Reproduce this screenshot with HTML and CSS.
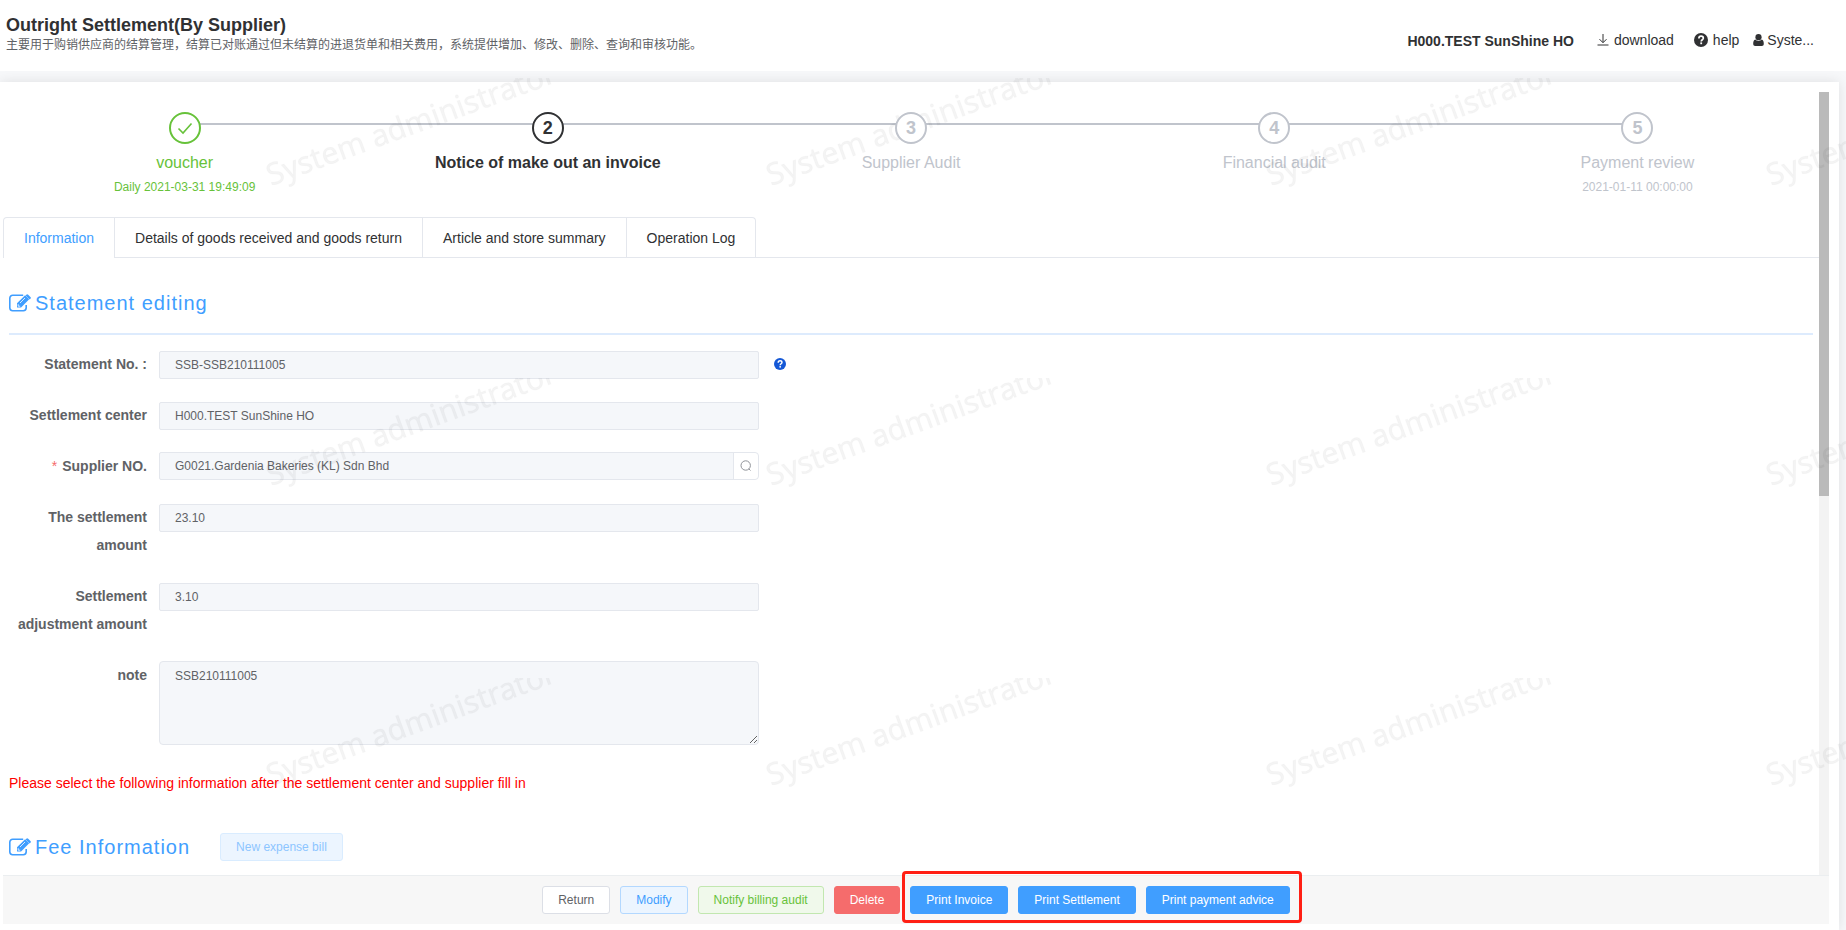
FILE: index.html
```html
<!DOCTYPE html>
<html lang="en">
<head>
    <meta charset="UTF-8">
    <title>Outright Settlement(By Supplier)</title>
    <link rel="stylesheet" href="styles.css">
</head>
<body>

    <svg class="icon-defs" width="0" height="0">
        <symbol id="icon-edit" viewBox="0 0 22 18">
            <path d="M17.200 11v2.800a2.900 2.900 0 0 1-2.900 2.900H3.700a2.900 2.900 0 0 1-2.900-2.900V4.200a2.900 2.900 0 0 1 2.900-2.900h10.500" fill="none" stroke="currentColor" stroke-width="1.600"/>
            <path d="M8 9.300 16.100 1.200 20.200 5.300 12.100 13.400H8z" fill="currentColor"/>
            <path d="M17.300.7a1.300 1.300 0 0 1 1.900 0l2.200 2.200a1.300 1.300 0 0 1 0 1.900l-.7.7-4.100-4.100z" fill="currentColor"/>
            <path d="M11 9 16 4M9.200 10.200v2h2" fill="none" stroke="#fff" stroke-width=".8"/>
        </symbol>
        <symbol id="icon-question" viewBox="0 0 14 14">
            <circle cx="7" cy="7" r="7" fill="currentColor"/>
            <path d="M4.900 5.400C4.900 4 5.800 3.200 7.100 3.200S9.300 4 9.300 5.200C9.300 6.700 7.200 6.800 7.200 8.500" fill="none" stroke="#fff" stroke-width="1.700"/>
            <rect x="6.300" y="9.400" width="1.800" height="1.800" fill="#fff"/>
        </symbol>
    </svg>

    <!-- header -->
    <div class="header">
        <div class="header-title">
            <h1>Outright Settlement(By Supplier)</h1>
            <p>主要用于购销供应商的结算管理，结算已对账通过但未结算的进退货单和相关费用，系统提供增加、修改、删除、查询和审核功能。</p>
        </div>
        <div class="header-tools">
            <span class="org">H000.TEST SunShine HO</span>
            <span class="tool download">
                <svg width="12" height="12" viewBox="0 0 12 12"><path d="M6 0v8.500M2.500 5.200 6 8.700l3.500-3.500M.5 11h11" fill="none" stroke="currentColor"/></svg>
                download
            </span>
            <span class="tool help">
                <svg width="14" height="14"><use href="#icon-question"/></svg>
                help
            </span>
            <span class="tool user">
                <svg width="11" height="12" viewBox="0 0 11 12"><circle cx="5.500" cy="3.200" r="3.100" fill="currentColor"/><path d="M2.400 5.500C.7 6 .2 7.800.2 9.800.2 11.200 1 12 2.200 12h6.600c1.200 0 2-.8 2-2.200 0-2-.5-3.800-2.200-4.300C7.900 6.200 6.900 6.900 5.500 6.900S3.100 6.200 2.400 5.500z" fill="currentColor"/></svg>
                Syste...
            </span>
        </div>
    </div>

    <div class="main">
        <div class="panel">
            <div class="scroll-area">
                <div class="content">

                    <!-- steps -->
                    <div class="steps">
                        <div class="step success">
                            <div class="step-icon"><svg width="16" height="14" viewBox="0 0 16 14"><path d="M1.500 7.500 6 12 14.500 2.500" fill="none" stroke="currentColor" stroke-width="1.600"/></svg></div>
                            <div class="step-title">voucher</div>
                            <div class="step-desc">Daily 2021-03-31 19:49:09</div>
                        </div>
                        <div class="step process">
                            <div class="step-icon">2</div>
                            <div class="step-title">Notice of make out an invoice</div>
                        </div>
                        <div class="step">
                            <div class="step-icon">3</div>
                            <div class="step-title">Supplier Audit</div>
                        </div>
                        <div class="step">
                            <div class="step-icon">4</div>
                            <div class="step-title">Financial audit</div>
                        </div>
                        <div class="step">
                            <div class="step-icon">5</div>
                            <div class="step-title">Payment review</div>
                            <div class="step-desc">2021-01-11 00:00:00</div>
                        </div>
                    </div>

                    <!-- tabs -->
                    <div class="tabs">
                        <div class="tab active">Information</div>
                        <div class="tab">Details of goods received and goods return</div>
                        <div class="tab">Article and store summary</div>
                        <div class="tab">Operation Log</div>
                    </div>

                    <div class="section-title">
                        <svg width="22" height="18"><use href="#icon-edit"/></svg>
                        <span>Statement editing</span>
                    </div>

                    <!-- form -->
                    <div class="form">
                        <div class="form-item">
                            <label>Statement No. :</label>
                            <div class="input">SSB-SSB210111005</div>
                            <svg class="tip" width="12" height="12"><use href="#icon-question"/></svg>
                        </div>
                        <div class="form-item">
                            <label>Settlement center</label>
                            <div class="input">H000.TEST SunShine HO</div>
                        </div>
                        <div class="form-item">
                            <label class="required">Supplier NO.</label>
                            <div class="input group">
                                <span>G0021.Gardenia Bakeries (KL) Sdn Bhd</span>
                                <span class="append"><svg width="12" height="12" viewBox="0 0 12 12"><circle cx="5.700" cy="5.500" r="4.700" fill="none" stroke="currentColor"/><path d="m8.800 8.800 1.700 1.700" stroke="currentColor"/></svg></span>
                            </div>
                        </div>
                        <div class="form-item">
                            <label>The settlement amount</label>
                            <div class="input">23.10</div>
                        </div>
                        <div class="form-item">
                            <label>Settlement adjustment amount</label>
                            <div class="input">3.10</div>
                        </div>
                        <div class="form-item note">
                            <label>note</label>
                            <textarea class="input" readonly>SSB210111005</textarea>
                        </div>
                    </div>

                    <p class="warning">Please select the following information after the settlement center and supplier fill in</p>

                    <div class="section-title fee">
                        <svg width="22" height="18"><use href="#icon-edit"/></svg>
                        <span>Fee Information</span>
                        <button class="btn btn-disabled">New expense bill</button>
                    </div>
                </div>
                <div class="scrollbar"><div class="scrollbar-thumb"></div></div>
            </div>

            <!-- footer buttons -->
            <div class="footer">
                <button class="btn">Return</button>
                <button class="btn btn-modify">Modify</button>
                <button class="btn btn-notify">Notify billing audit</button>
                <button class="btn btn-delete">Delete</button>
                <div class="print-group">
                    <button class="btn btn-print">Print Invoice</button>
                    <button class="btn btn-print">Print Settlement</button>
                    <button class="btn btn-print">Print payment advice</button>
                </div>
            </div>
        </div>
    </div>

    <!-- watermark -->
    <svg class="watermark" width="1596" height="852">
        <defs>
            <pattern id="mark" width="500" height="300" patternUnits="userSpaceOnUse">
                <text class="watermark-text" transform="translate(21 108) rotate(-20)">System administrator</text>
            </pattern>
        </defs>
        <rect width="1596" height="852" fill="url(#mark)"/>
    </svg>

</body>
</html>
```
FILE: styles.css
```css
* {
    box-sizing: border-box;
}

body {
    margin: 0;
    height: 930px;
    display: flex;
    flex-direction: column;
    overflow: hidden;
    background: #fff;
    color: #303133;
    font-family: "Liberation Sans", Arial, "Noto Sans CJK SC", sans-serif;
    font-size: 14px;
}

.icon-defs {
    position: absolute;
}

/* header */
.header {
    height: 71px;
    display: flex;
    justify-content: space-between;
    padding: 14px 32px 0 6px;
}

.header h1 {
    margin: 0;
    font-size: 18px;
    line-height: 22px;
}

.header p {
    margin: 0;
    font-size: 12px;
    line-height: 19px;
    color: #606266;
}

.header-tools {
    display: flex;
    align-items: center;
    height: 52px;
    white-space: nowrap;
}

.org {
    font-weight: bold;
    margin-right: 23px;
    padding-top: 2px;
}

.tool {
    display: flex;
    align-items: center;
    gap: 5px;
}

.download {
    margin-right: 20px;
}

.help {
    margin-right: 14px;
}

.user {
    gap: 3px;
}

/* main panel */
.main {
    flex: 1;
    padding: 11px 7px 0 0;
    background: #f7f8fa;
    overflow: hidden;
}

.panel {
    height: 100%;
    padding: 10px 10px 6px 3px;
    background: #fff;
    box-shadow: 0 0 12px rgba(0, 0, 0, 0.1);
    display: flex;
    flex-direction: column;
}

.scroll-area {
    flex: 1;
    display: flex;
    min-height: 0;
}

.content {
    flex: 1;
}

.scrollbar {
    width: 10px;
    background: #f3f3f3;
}

.scrollbar-thumb {
    height: 404px;
    background: #bababa;
}

/* steps */
.steps {
    display: flex;
    height: 125px;
    padding-top: 20px;
}

.step {
    flex: 1;
    position: relative;
    text-align: center;
    color: #c0c4cc;
}

.step:not(:last-child)::before {
    content: "";
    position: absolute;
    top: 11px;
    left: 50%;
    width: 100%;
    height: 2px;
    background: #c0c4cc;
}

.step-icon {
    position: relative;
    z-index: 1;
    width: 32px;
    height: 32px;
    margin: 0 auto;
    border: 2px solid currentColor;
    border-radius: 50%;
    background: #fff;
    display: flex;
    align-items: center;
    justify-content: center;
    font-size: 18px;
    font-weight: bold;
}

.step-title {
    font-size: 16px;
    line-height: 37px;
}

.step-desc {
    font-size: 12px;
    line-height: 12px;
}

.success {
    color: #67c23a;
}

.process {
    color: #303133;
}

.process .step-title {
    font-weight: bold;
}

/* tabs */
.tabs {
    display: flex;
    height: 41px;
    border-bottom: 1px solid #e4e7ed;
}

.tab {
    height: 40px;
    padding: 0 20px;
    line-height: 40px;
    border: 1px solid #e4e7ed;
    border-left: none;
    border-bottom: none;
}

.tab:first-child {
    border-left: 1px solid #e4e7ed;
    border-radius: 4px 0 0 0;
}

.tab:last-child {
    border-radius: 0 4px 0 0;
}

.tab.active {
    height: 41px;
    color: #409eff;
    background: #fff;
}

/* section title */
.section-title {
    display: flex;
    align-items: center;
    gap: 4px;
    height: 77px;
    margin: 0 6px;
    padding: 15px 0 0;
    border-bottom: 2px solid #ddebfd;
    color: #409eff;
    font-size: 20px;
    letter-spacing: 1px;
}

.section-title.fee {
    height: 28px;
    padding: 0;
    border: none;
}

.fee .btn {
    margin-left: 26px;
}

/* form */
.form {
    padding-top: 16px;
}

.form-item {
    display: flex;
    align-items: flex-start;
    margin-bottom: 23px;
}

.form-item label {
    width: 156px;
    margin: -1px 0 1px;
    padding-right: 12px;
    text-align: right;
    font-weight: bold;
    line-height: 28px;
    color: #606266;
}

.required::before {
    content: "*";
    margin-right: 5px;
    color: #f56c6c;
    font-weight: normal;
}

.input {
    width: 600px;
    height: 28px;
    padding: 0 15px;
    border: 1px solid #e4e7ed;
    border-radius: 2px;
    background: #f5f7fa;
    color: #606266;
    font-size: 12px;
    line-height: 26px;
}

.group {
    display: flex;
    justify-content: space-between;
    margin-top: -1px;
    padding-right: 0;
    border-radius: 2px 4px 4px 2px;
}

.append {
    width: 25px;
    display: flex;
    align-items: center;
    justify-content: center;
    border-left: 1px solid #e4e7ed;
    border-radius: 0 4px 4px 0;
    background: #fff;
    color: #909399;
}

.tip {
    margin: 7px 0 0 15px;
    color: #1558d6;
}

textarea.input {
    height: 84px;
    margin-top: -1px;
    padding: 5px 15px;
    border-radius: 4px;
    font-family: inherit;
    line-height: 18px;
    outline: none;
}

.form-item.note {
    margin-bottom: 0;
}

.warning {
    margin: 27px 6px 39px;
    line-height: 22px;
    color: #f00;
}

/* buttons */
.btn {
    height: 28px;
    padding: 0 15px;
    border: 1px solid #dcdfe6;
    border-radius: 3px;
    background: #fff;
    color: #606266;
    font-family: inherit;
    font-size: 12px;
    line-height: 26px;
    white-space: nowrap;
}

.btn-disabled {
    color: #8cc5ff;
    background: #ecf5ff;
    border-color: #d9ecff;
}

.btn-modify {
    color: #409eff;
    background: #ecf5ff;
    border-color: #b3d8ff;
}

.btn-notify {
    color: #67c23a;
    background: #f0f9eb;
    border-color: #c2e7b0;
}

.btn-delete {
    color: #fff;
    background: #f56c6c;
    border-color: #f56c6c;
}

.btn-print {
    color: #fff;
    background: #409eff;
    border-color: #409eff;
}

/* footer */
.footer {
    height: 49px;
    display: flex;
    align-items: flex-start;
    justify-content: center;
    gap: 10px;
    padding: 10px 0 0 12px;
    border-top: 1px solid #ebeef0;
    background: #f7f7f7;
}

.print-group {
    display: flex;
    gap: 10px;
    margin: -15px 0 0 -8px;
    padding: 12px 9px 6px 5px;
    border: 3px solid #ff1f14;
    border-radius: 4px;
}

/* watermark */
.watermark {
    position: absolute;
    top: 78px;
    left: 250px;
    pointer-events: none;
}

.watermark-text {
    font-family: "Noto Sans", sans-serif;
    font-size: 30.3px;
    fill: rgba(0, 0, 0, 0.045);
    stroke: rgba(0, 0, 0, 0.02);
    stroke-width: 0.5px;
}
```
